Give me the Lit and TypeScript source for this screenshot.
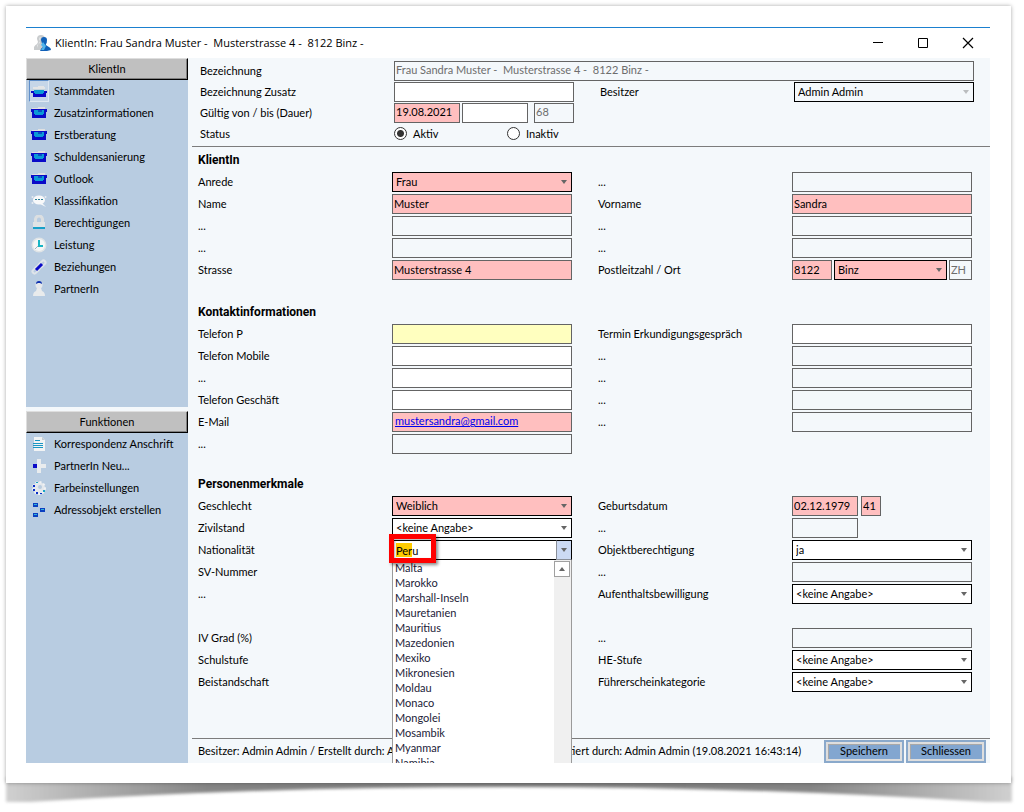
import { LitElement, html, svg, css, nothing, TemplateResult } from "lit";
import { customElement, state } from "lit/decorators.js";
import { classMap } from "lit/directives/class-map.js";

type Kind = "off" | "text" | "need" | "hint" | "select" | "mail" | "combo" | "place" | "birth" | "short" | "none";

interface Field {
  label: string;
  kind: Kind;
  value?: string;
  tone?: "pink" | "plain";
}

type Row = [Field, Field];

const f = (label: string, kind: Kind, value = "", tone: "pink" | "plain" = "plain"): Field => ({ label, kind, value, tone });
const off = () => f("...", "off");
const blank = () => f("", "none");

const sections: { title: string; rows: Row[] }[] = [
  {
    title: "KlientIn",
    rows: [
      [f("Anrede", "select", "Frau", "pink"), off()],
      [f("Name", "need", "Muster"), f("Vorname", "need", "Sandra")],
      [off(), off()],
      [off(), off()],
      [f("Strasse", "need", "Musterstrasse 4"), f("Postleitzahl / Ort", "place")],
    ],
  },
  {
    title: "Kontaktinformationen",
    rows: [
      [f("Telefon P", "hint"), f("Termin Erkundigungsgespräch", "text")],
      [f("Telefon Mobile", "text"), off()],
      [f("...", "text"), off()],
      [f("Telefon Geschäft", "text"), off()],
      [f("E-Mail", "mail", "mustersandra@gmail.com"), off()],
      [off(), blank()],
    ],
  },
  {
    title: "Personenmerkmale",
    rows: [
      [f("Geschlecht", "select", "Weiblich", "pink"), f("Geburtsdatum", "birth")],
      [f("Zivilstand", "select", "<keine Angabe>"), f("...", "short")],
      [f("Nationalität", "combo", "Peru"), f("Objektberechtigung", "select", "ja")],
      [f("SV-Nummer", "text"), off()],
      [f("...", "text"), f("Aufenthaltsbewilligung", "select", "<keine Angabe>")],
      [blank(), blank()],
      [f("IV Grad (%)", "text"), off()],
      [f("Schulstufe", "select", "<keine Angabe>"), f("HE-Stufe", "select", "<keine Angabe>")],
      [f("Beistandschaft", "select", "<keine Angabe>"), f("Führerscheinkategorie", "select", "<keine Angabe>")],
    ],
  },
];

const countries = [
  "Malta", "Marokko", "Marshall-Inseln", "Mauretanien", "Mauritius", "Mazedonien", "Mexiko",
  "Mikronesien", "Moldau", "Monaco", "Mongolei", "Mosambik", "Myanmar", "Namibia",
];

const glyphs: Record<string, TemplateResult> = {
  open: svg`
    <path d="M2 6V4h5V3h6v1h1v2z" fill="#e4e5e6"/>
    <path d="M1 6h14v1H1z" fill="#c4d3de"/>
    <path d="M0 8h16v2h-1v4H2v-4H0z" fill="#0a0ac8"/>
    <path d="M3 7h10v3h-1v1H4v-1H3z" fill="#0a9ad6"/>`,
  folder: svg`
    <path d="M1 4V3h6V2h7v2z" fill="#e0e0e0"/>
    <path d="M0 4h16v3h-1v6H1V7H0z" fill="#0a0ac8"/>
    <path d="M3 5h10v4h-1v1H4V9H3z" fill="#0a9ad6"/>
    <path d="M7 5h4v2H7z" fill="#0a50c8"/>`,
  chat: svg`
    <ellipse cx="8" cy="7" rx="6" ry="4.5" fill="#f8f9fa"/>
    <circle cx="1.5" cy="4" r="1" fill="#e8ecf0"/><circle cx="14.5" cy="4" r="1" fill="#e8ecf0"/>
    <circle cx="1.5" cy="10" r="1" fill="#e8ecf0"/>
    <path d="M11 10l4 4-6-3z" fill="#f8f9fa"/>
    <path d="M4 6h2v1H4zM7 6h2v1H7zM10 6h2v1h-2z" fill="#2b7f96"/>`,
  lock: svg`
    <path d="M4.5 8V4Q5 1 8 1t3.5 3v4" fill="none" stroke="#dcdfe1" stroke-width="3"/>
    <path d="M2 7h12v7H2z" fill="#e0e3e5"/><path d="M2 12h12v2H2z" fill="#18a0c8"/>`,
  clock: svg`
    <circle cx="8" cy="8" r="7.5" fill="#e0e4e6"/><circle cx="8" cy="8" r="6" fill="#f5f6f6"/>
    <path d="M7 3h2v5h3v2H7z" fill="#17b5c4"/><path d="M7 9l-3 3" stroke="#9fb4bd"/>`,
  link: svg`
    <path d="M3.500 12.500l3-3M9.500 6.500l3-3" stroke="#dfe4ea" stroke-width="6" stroke-linecap="round"/>
    <path d="M3 13l2-2M11 5l2-2" stroke="#b8cce1" stroke-width="2"/>
    <path d="M5 11l6-6" stroke="#0a0ac8" stroke-width="3"/>`,
  person: svg`
    <path d="M2 15q0-4 3-5l1-3h4l1 3q3 1 3 5z" fill="#e9ebec"/><circle cx="8" cy="4" r="3.500" fill="#e6e8ea"/>
    <path d="M5 3q0-3 3-3t3 3l-2-1H7z" fill="#0b2fae"/>`,
  letter: svg`
    <path d="M3 1h8l3 3v11H3z" fill="#f1f3f4"/><path d="M11 1l3 3h-3z" fill="#c7ced4"/>
    <path d="M4 4h5v1H4zM2 7h10v1H2zM2 9h10v1H2zM2 11h10v1H2z" fill="#1896c4"/>`,
  plus: svg`
    <path d="M6 1h4v5h5v4h-5v5H6v-5H3V6h3z" fill="#e9ecee"/><path d="M2 6h4v4H2z" fill="#0a0ac8"/>`,
  palette: svg`
    <circle cx="8" cy="8" r="6" fill="#e4e8ec" stroke="#f0f2f4" stroke-width="2" stroke-dasharray="2 2"/>
    <circle cx="9" cy="7" r="2" fill="#b8cce1"/>
    <path d="M2 5h2v2H2zM2 9h2v2H2zM5 12h2v2H5zM9 13h2v1H9z" fill="#0a2fc8"/><path d="M5 2h2v1H5zM12 10h2v2h-2z" fill="#17a5c4"/>`,
  nodes: svg`
    <path d="M2 1h5v4H2zM2 11h5v4H2zM9 6h5v4H9z" fill="#0a3fc0"/>
    <path d="M3 2h3v1H3zM3 12h3v1H3zM10 7h3v1h-3z" fill="#2fb2dc"/>`,
};

const menu: [string, string][] = [
  ["open", "Stammdaten"], ["folder", "Zusatzinformationen"], ["folder", "Erstberatung"],
  ["folder", "Schuldensanierung"], ["folder", "Outlook"], ["chat", "Klassifikation"],
  ["lock", "Berechtigungen"], ["clock", "Leistung"], ["link", "Beziehungen"], ["person", "PartnerIn"],
];

const actions: [string, string][] = [
  ["letter", "Korrespondenz Anschrift"], ["plus", "PartnerIn Neu..."],
  ["palette", "Farbeinstellungen"], ["nodes", "Adressobjekt erstellen"],
];

@customElement("app-root")
export class AppRoot extends LitElement {
  @state() private current = "Stammdaten";

  static styles = css`
    :host {
      display: block;
      background: #fff;
      color: #000;
      font: 11px/14px Lato, "Liberation Sans", sans-serif;
    }
    * { box-sizing: border-box; }
    input, select, button { font: inherit; color: inherit; margin: 0; border-radius: 0; }
    .page { padding: 6px 13px 0 6px; }
    .paper {
      position: relative;
      z-index: 1;
      background: #fff;
      padding: 21px 21px 20px 20px;
      box-shadow: 0 0 4px rgba(0, 0, 0, 0.35);
    }
    .curl { display: block; width: 100%; height: 24px; overflow: visible; }
    .window { border-top: 1px solid #1b80cf; overflow: hidden; }
    .titlebar { display: flex; align-items: center; height: 30px; padding-left: 7px; }
    .titlebar svg.logo { width: 18px; height: 18px; margin-right: 4px; }
    .title {
      flex: 1;
      margin: 0;
      font: 11px/16px "Open Sans", sans-serif;
      white-space: pre;
    }
    .cap { width: 45px; height: 30px; border: 0; padding: 0; background: none; display: grid; place-items: center; }
    .cap svg { width: 12px; height: 12px; }
    .columns { display: grid; grid-template-columns: 162px minmax(0, 1fr); background: #f4f8fb; }

    .side { display: flex; flex-direction: column; gap: 4px; }
    .panel { background: #b8cce1; min-height: 349px; }
    .panel.rest { flex: 1; min-height: 0; }
    .panel h2 {
      margin: 0;
      height: 22px;
      font: inherit;
      line-height: 20px;
      text-align: center;
      background: #c0c0c0;
      border: 1px solid;
      border-color: #dedede #000 #000 #dedede;
      box-shadow: inset -1px -1px #808080;
    }
    .panel ul { list-style: none; margin: 0; padding: 0 3px; }
    .item {
      display: flex;
      align-items: center;
      gap: 5px;
      width: 100%;
      height: 22px;
      padding: 0;
      border: 0;
      background: none;
      text-align: left;
      text-decoration: none;
      white-space: nowrap;
      color: inherit;
    }
    .item .pic { width: 20px; height: 22px; display: grid; place-items: center; flex: none; border: 1px solid transparent; }
    .item.on .pic { background: #c6d6e8; border-color: #5f8fca #dfe8f2 #dfe8f2 #5f8fca; }
    .pic svg { width: 16px; height: 16px; }

    .main { display: flex; flex-direction: column; min-width: 0; }
    .head, .row {
      display: grid;
      grid-template-columns: 194fr 180fr 26fr 194fr 180fr;
      align-items: center;
    }
    .head { grid-auto-rows: 21px; margin-left: 4px; padding: 2px 16px 2px 8px; border-bottom: 1px solid #7c7c7c; }
    .head .wide { grid-column: 2 / 6; }
    .head .second { grid-column: 4; }
    .body { flex: 1; padding: 2px 18px 45px 10px; }
    .body h3 { margin: 0; font: 700 12px/22px Roboto, "Liberation Sans", sans-serif; }
    .body section + section { margin-top: 20px; }
    .body section:last-child { margin-top: 18px; }
    .row { height: 22px; }
    .row .gap { grid-column: 3; }

    .box {
      width: 100%;
      height: 20px;
      padding: 0 1px 2px;
      border: 1px solid #646464;
      background: #fff;
      display: block;
      outline: 0;
    }
    .box.off { background: #f4f8fb; color: #6d6d6d; }
    .box.need { background: #ffbfbf; }
    .box.hint { background: #ffffbf; }
    .box a { color: #00e; }
    .box.mail { padding: 0 2px; line-height: 16px; }
    .group { display: flex; gap: 2px; }
    .group.apart { gap: 3px; }
    .date { width: 66px; flex: none; }
    .days { width: 40px; flex: none; margin-left: auto; }
    .zip { width: 40px; flex: none; }
    .canton { width: 23px; flex: none; }
    .age { width: 20px; flex: none; }

    .pick { display: grid; flex: 1; min-width: 0; position: relative; }
    .pick select, .pick .entry, .pick > svg { grid-area: 1 / 1; }
    .pick select, .pick .entry {
      appearance: none;
      width: 100%;
      height: 20px;
      padding: 0 18px 0 3px;
      border: 1px solid #000;
      background: #fff;
      outline: 0;
    }
    .pick.pink select { background: #ffbfbf; }
    .pick.locked select { background: #f4f8fb; opacity: 1; color: inherit; }
    .pick.locked svg { opacity: 0.4; }
    .pick > svg { width: 6px; height: 4px; justify-self: end; align-self: center; margin-right: 5px; pointer-events: none; }
    .pick .entry { background: linear-gradient(#fc0, #fc0) 3px 2px / 16px 14px no-repeat #fff; }
    .pick .drop {
      grid-area: 1 / 1;
      justify-self: end;
      width: 16px;
      height: 20px;
      padding: 0;
      border: 1px solid #8a8f98;
      border-color: #000 #000 #8a8f98 #8a8f98;
      background: #ccdaf3;
    }
    .menu {
      position: absolute;
      top: 100%;
      left: 0;
      right: 0;
      z-index: 2;
      height: 230px;
      display: grid;
      grid-template-columns: 1fr 17px;
      border: 1px solid #9a9a9a;
      border-top: 0;
      background: #fff;
      color: #222238;
      line-height: 15px;
    }
    .menu ul { list-style: none; margin: 0; padding: 0 2px; }
    .scroll { background: #f0f0f0; }
    .scroll button { display: grid; place-items: center; width: 16px; height: 16px; margin-top: 1px; padding: 0; border: 1px solid #a0a0a0; background: #fff; }
    .scroll svg { width: 6px; height: 4px; }
    .mark {
      position: absolute;
      top: -6px;
      left: -3px;
      z-index: 3;
      width: 47px;
      height: 29px;
      border: 5px solid #f00;
      box-shadow: 2px 2px 3px rgba(0, 0, 0, 0.45), inset 1px 1px 2px rgba(0, 0, 0, 0.3);
      pointer-events: none;
    }

    .radios { display: flex; grid-column: 2 / 4; }
    .radios label { display: flex; align-items: center; gap: 6px; width: 113px; flex: none; }
    .radios input {
      appearance: none;
      width: 13px;
      height: 13px;
      border: 1px solid #333;
      border-radius: 50%;
      background: #fff;
    }
    .radios input:checked { background: radial-gradient(circle, #333 0 3px, #fff 4px); }

    .foot { display: flex; align-items: center; gap: 2px; height: 25px; margin-left: 4px; padding: 0 4px 0 6px; border-top: 1px solid #7c7c7c; }
    .foot p { flex: 1; margin: 0; white-space: nowrap; }
    .foot button {
      width: 80px;
      height: 23px;
      padding: 0;
      border: 2px solid #8aa9cb;
      background: #82a6d0;
      box-shadow: inset 0 0 0 2px #dedede, inset 1px 1px 0 2px #a8a8a8;
    }
  `;

  private arrow(up = false) {
    return html`<svg viewBox="0 0 6 4" aria-hidden="true"><path d=${up ? "M0 4h6L3 0z" : "M0 0h6L3 4z"} fill="#666" /></svg>`;
  }

  private select(id: string, value: string, tone = "plain", locked = false) {
    return html`<span class=${classMap({ pick: true, pink: tone === "pink", locked })}>
      <select id=${id} ?disabled=${locked}><option>${value}</option></select>${this.arrow()}
    </span>`;
  }

  private control(field: Field, id: string) {
    const { kind, value = "", tone } = field;
    switch (kind) {
      case "off":
        return html`<input class="box off" id=${id} type="text" disabled />`;
      case "text":
      case "need":
      case "hint":
        return html`<input class="box ${kind}" id=${id} type="text" .value=${value} />`;
      case "select":
        return this.select(id, value, tone);
      case "mail":
        return html`<div class="box need mail"><a id=${id} href="mailto:${value}" aria-labelledby="${id}-l">${value}</a></div>`;
      case "short":
        return html`<div class="group"><input class="box off date" id=${id} type="text" disabled /></div>`;
      case "birth":
        return html`<div class="group apart">
          <input class="box need date" id=${id} type="text" .value=${"02.12.1979"} />
          <input class="box need age" type="text" aria-label="Alter" .value=${"41"} />
        </div>`;
      case "place":
        return html`<div class="group">
          <input class="box need zip" id=${id} type="text" .value=${"8122"} />
          ${this.select(`${id}-ort`, "Binz", "pink")}
          <input class="box off canton" type="text" aria-label="Kanton" disabled .value=${"ZH"} />
        </div>`;
      case "combo":
        return html`<span class="pick">
          <input class="entry" id=${id} type="text" role="combobox" aria-expanded="true" aria-controls="laender" .value=${value} />
          <button class="drop" type="button" aria-label="Liste öffnen"></button>${this.arrow()}
          <span class="mark"></span>
          <div class="menu">
            <ul id="laender" role="listbox">${countries.map((c) => html`<li role="option">${c}</li>`)}</ul>
            <div class="scroll"><button type="button" aria-label="Nach oben">${this.arrow(true)}</button></div>
          </div>
        </span>`;
      default:
        return html`<span></span>`;
    }
  }

  private pair(field: Field, id: string) {
    return html`${field.kind === "none"
      ? html`<span></span>`
      : html`<label id="${id}-l" for=${id}>${field.label}</label>`}${this.control(field, id)}`;
  }

  private entry([icon, text]: [string, string]) {
    const on = text === this.current;
    return html`<li><a class=${classMap({ item: true, on })} href="#" aria-current=${on ? "page" : nothing}
      @click=${(e: Event) => { e.preventDefault(); this.current = text; }}>
      <span class="pic"><svg viewBox="0 0 16 16" fill="none" aria-hidden="true">${glyphs[icon]}</svg></span>${text}</a></li>`;
  }

  private action([icon, text]: [string, string]) {
    return html`<li><button class="item" type="button">
      <span class="pic"><svg viewBox="0 0 16 16" fill="none" aria-hidden="true">${glyphs[icon]}</svg></span>${text}</button></li>`;
  }

  render() {
    const name = "Frau Sandra Muster -  Musterstrasse 4 -  8122 Binz -";
    return html`<div class="page">
      <div class="paper">
        <div class="window">
          <header class="titlebar">
            <svg class="logo" viewBox="0 0 18 18" aria-hidden="true">
              <path d="M1 16v-3q1-2 3-3l1-2-1-3q0-4 4-4t4 4l-1 4v7z" fill="#c9ccce" />
              <path d="M4 14v-3l3-2-1-4q0-2 2-2" fill="#e4e6e7" />
              <path d="M8 6q0-3 3-3t3 3q0 3-1 4t3 3q2 1 2 3l-4 1H7q1-3 3-4z" fill="#1060b8" />
              <path d="M8 11l2-3 3 4-2 4H8l2-3z" fill="#4fb4ec" />
            </svg>
            <h1 class="title">KlientIn: ${name}</h1>
            <button class="cap" type="button" aria-label="Minimieren"><svg viewBox="0 0 12 12"><path d="M1 5.500h10" stroke="#000" /></svg></button>
            <button class="cap" type="button" aria-label="Maximieren"><svg viewBox="0 0 12 12"><path d="M1.500 1.500h9v9h-9z" fill="none" stroke="#000" /></svg></button>
            <button class="cap" type="button" aria-label="Fenster schliessen"><svg viewBox="0 0 12 12"><path d="M1 1l10 10M11 1L1 11" stroke="#000" stroke-width="1.200" /></svg></button>
          </header>
          <div class="columns">
            <aside class="side">
              <nav class="panel"><h2>KlientIn</h2><ul>${menu.map((m) => this.entry(m))}</ul></nav>
              <div class="panel rest"><h2>Funktionen</h2><ul>${actions.map((m) => this.action(m))}</ul></div>
            </aside>
            <main class="main">
              <div class="head">
                <label for="bez">Bezeichnung</label>
                <input class="box off wide" id="bez" type="text" disabled .value=${name} />
                <label for="zus">Bezeichnung Zusatz</label>
                <input class="box" id="zus" type="text" />
                <label class="second" for="bes">Besitzer</label>
                ${this.select("bes", "Admin Admin", "plain", true)}
                <label for="von">Gültig von / bis (Dauer)</label>
                <div class="group">
                  <input class="box need date" id="von" type="text" .value=${"19.08.2021"} />
                  <input class="box date" type="text" aria-label="Gültig bis" />
                  <input class="box off days" type="text" aria-label="Dauer" disabled .value=${"68"} />
                </div>
                <span></span><span></span><span></span>
                <span id="status">Status</span>
                <div class="radios" role="radiogroup" aria-labelledby="status">
                  <label><input type="radio" name="status" checked />Aktiv</label>
                  <label><input type="radio" name="status" />Inaktiv</label>
                </div>
              </div>
              <div class="body">
                ${sections.map((s, i) => html`<section>
                  <h3>${s.title}</h3>
                  ${s.rows.map(([a, b], j) => html`<div class="row">${this.pair(a, `a${i}${j}`)}<span class="gap"></span>${this.pair(b, `b${i}${j}`)}</div>`)}
                </section>`)}
              </div>
              <footer class="foot">
                <p>Besitzer: Admin Admin / Erstellt durch: Admin Admin (19.08.2021 9:14) / Mutiert durch: Admin Admin (19.08.2021 16:43:14)</p>
                <button type="button">Speichern</button>
                <button type="button">Schliessen</button>
              </footer>
            </main>
          </div>
        </div>
      </div>
      <svg class="curl" viewBox="0 0 1000 24" preserveAspectRatio="none" aria-hidden="true">
        <defs>
          <linearGradient id="shade">
            <stop offset="0" stop-color="#d0d0d0" /><stop offset="0.060" stop-color="#b8b8b8" />
            <stop offset="0.200" stop-color="#858585" /><stop offset="0.500" stop-color="#7c7c7c" />
            <stop offset="0.800" stop-color="#858585" /><stop offset="0.940" stop-color="#b8b8b8" />
            <stop offset="1" stop-color="#d0d0d0" />
          </linearGradient>
          <filter id="soft" x="-5%" y="-50%" width="110%" height="200%"><feGaussianBlur stdDeviation="1.500" /></filter>
        </defs>
        <path d="M0 -6V19L24 19Q250 4 500 4T976 19L1001 19V-6z" fill="url(#shade)" filter="url(#soft)" />
      </svg>
    </div>`;
  }
}
